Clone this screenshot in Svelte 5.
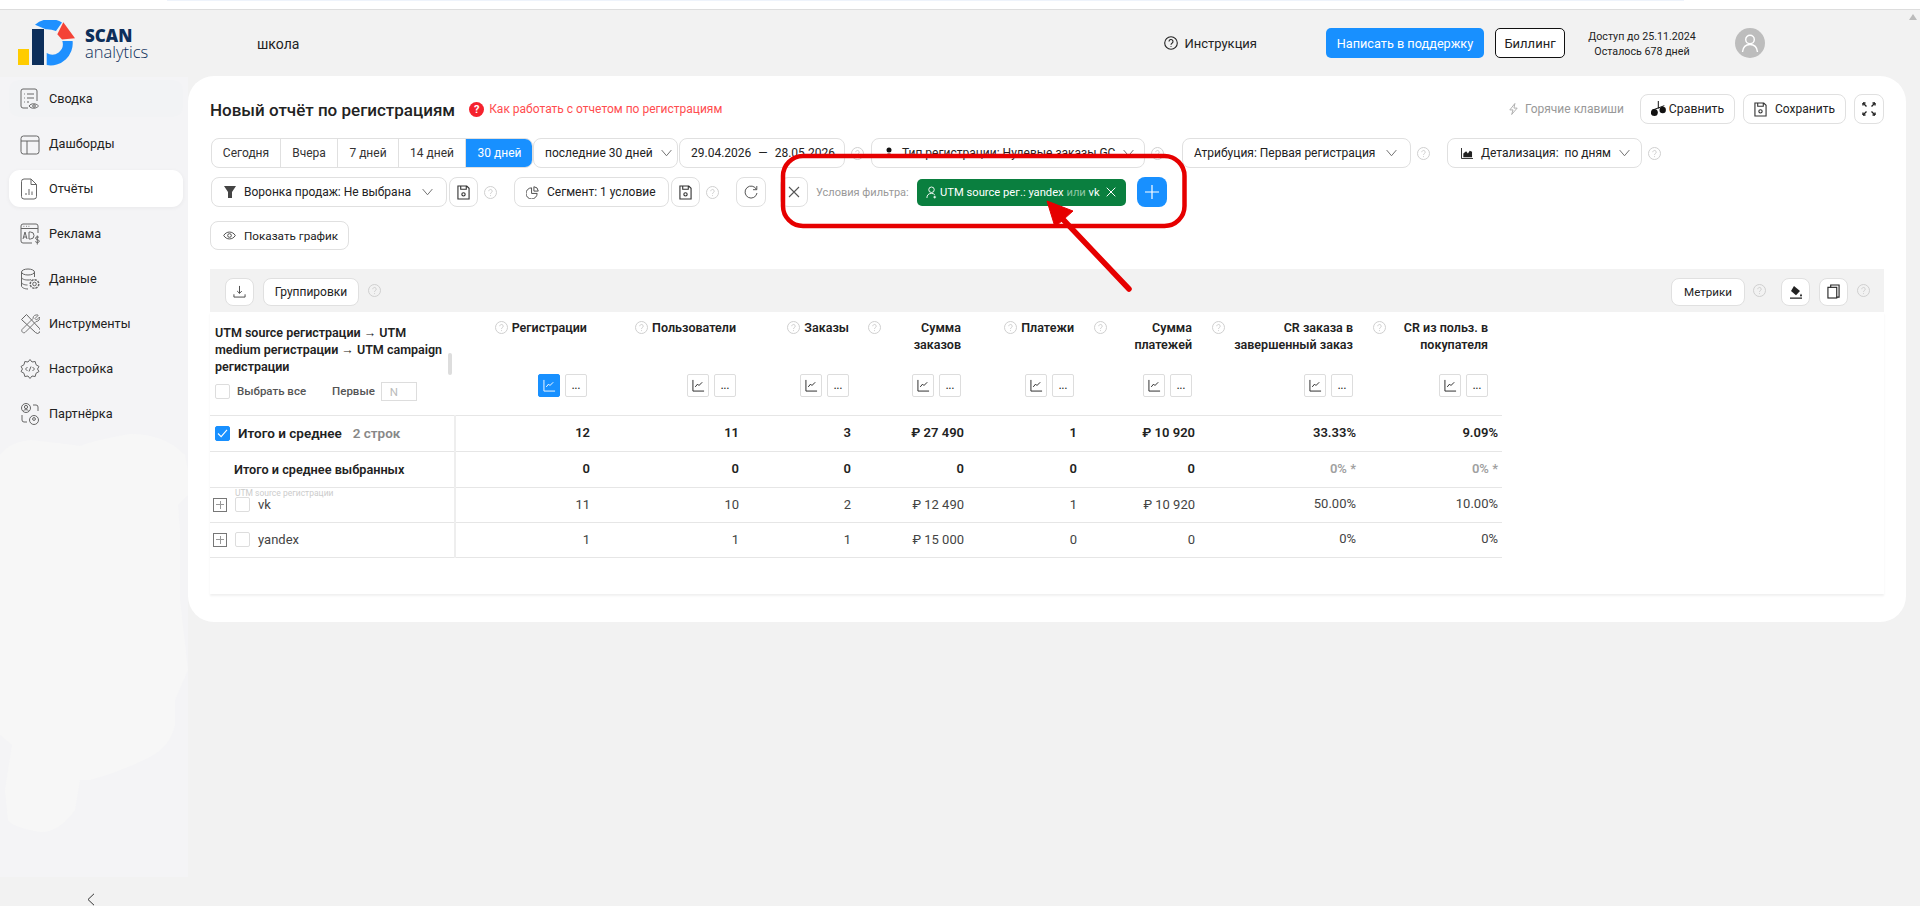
<script>
  const nav = [
    { label: "Сводка", icon: "summary" },
    { label: "Дашборды", icon: "dash" },
    { label: "Отчёты", icon: "report", active: true },
    { label: "Реклама", icon: "ads" },
    { label: "Данные", icon: "data" },
    { label: "Инструменты", icon: "tools" },
    { label: "Настройка", icon: "settings" },
    { label: "Партнёрка", icon: "partner" }
  ];

  const ranges = ["Сегодня", "Вчера", "7 дней", "14 дней", "30 дней"];

  const cols = [
    { title: "Регистрации", cls: "c1", on: true },
    { title: "Пользователи", cls: "c2" },
    { title: "Заказы", cls: "c3" },
    { title: "Сумма заказов", cls: "c4", wrap: true },
    { title: "Платежи", cls: "c5" },
    { title: "Сумма платежей", cls: "c6", wrap: true },
    { title: "CR заказа в завершенный заказ", cls: "c7", wrap: true },
    { title: "CR из польз. в покупателя", cls: "c8", wrap: true }
  ];

  const rows = [
    { name: "Итого и среднее", kind: "total", cells: ["12", "11", "3", "₽ 27 490", "1", "₽ 10 920", "33.33%", "9.09%"] },
    { name: "Итого и среднее выбранных", kind: "sel", cells: ["0", "0", "0", "0", "0", "0", "0% *", "0% *"] },
    { name: "vk", kind: "row", sub: "UTM source регистрации", cells: ["11", "10", "2", "₽ 12 490", "1", "₽ 10 920", "50.00%", "10.00%"] },
    { name: "yandex", kind: "row", cells: ["1", "1", "1", "₽ 15 000", "0", "0", "0%", "0%"] }
  ];
</script>

{#snippet help()}
  <svg class="help" viewBox="0 0 13 13" width="13" height="13" fill="none" stroke="#cfcfcf">
    <circle cx="6.5" cy="6.5" r="6" />
    <path d="M4.8 5.2a1.7 1.7 0 1 1 2.6 1.4c-.6.4-.9.7-.9 1.4M6.5 9.2v.9" />
  </svg>
{/snippet}

{#snippet chevron()}
  <svg class="chev" viewBox="0 0 12 8" width="11" height="8" fill="none" stroke="#666">
    <path d="M.7.8 6 7 11.3.8" />
  </svg>
{/snippet}

{#snippet save()}
  <svg viewBox="0 0 14 16" width="13" height="15" fill="none" stroke="#333" stroke-width="1.2">
    <path d="M1 1h9.5L13 3.5V15H1zM4 1v3.5h6V1" />
    <circle cx="7" cy="10" r="1.8" />
  </svg>
{/snippet}

{#snippet chart(on)}
  <svg viewBox="0 0 14 14" width="13" height="13" fill="none" stroke={on ? "#fff" : "#222"}>
    <path d="M1 1v12h12M3.5 8.5l2.5-3 1.5 1.5L11 3.5" />
  </svg>
{/snippet}

{#snippet navIcon(name)}
  <svg viewBox="0 0 20 22" width="20" height="22" fill="none" stroke="#666" stroke-width="1">
    {#if name === "summary"}
      <path d="M8 20H3a2 2 0 0 1-2-2V3a2 2 0 0 1 2-2h12a2 2 0 0 1 2 2v10" />
      <path d="M4 6h.8M4 10h.8M4 14h.8M7 6h7M7 10h7M7 14h2" />
      <path d="M9 18c2-3 7-3 9.500 0-2.500 3-7.500 3-9.500 0z" />
      <circle cx="14" cy="18" r="1.300" />
    {:else if name === "dash"}
      <rect x="1" y="3" width="18" height="18" rx="2.500" />
      <path d="M1 8h18M7 8v13" />
    {:else if name === "report"}
      <path d="M11 1H4a2.500 2.500 0 0 0-2.500 2.500v15A2.500 2.500 0 0 0 4 21h10a2.500 2.500 0 0 0 2.500-2.500V6.500z" />
      <path d="M11 1v5.500h5.500M6 17v-2M9 17v-6M12 17v-3.500" />
    {:else if name === "ads"}
      <path d="M12 20H3a2 2 0 0 1-2-2V3a2 2 0 0 1 2-2h13a2 2 0 0 1 2 2v7M1 5.500h17M3.500 3.300h.8M6 3.300h.8M8.500 3.300h.8" />
      <path d="M3 16l2-7 2 7M3.700 14h2.600M9 9v7h1.500a3.500 3.500 0 0 0 0-7zM19 14.500c-.5-1-3.500-1-3.500.7s3.800 1.200 3.800 3-3.500 1.500-4 .3M17.300 12.500v9" />
    {:else if name === "data"}
      <ellipse cx="8" cy="4" rx="6.500" ry="3" />
      <path d="M1.500 4v14c0 1.500 3 3 6.500 3M1.500 9c0 2 3 3 6.500 3 1 0 2 0 3-.3M1.500 14c0 2 3 3 6 3M14.500 4v5" />
      <circle cx="14.500" cy="16" r="1.800" />
      <circle cx="14.500" cy="16" r="4.300" stroke-dasharray="2.300 1" stroke-width="1.500" />
    {:else if name === "tools"}
      <path d="M2 7 7 2l13 14a2.800 2.800 0 0 1-4 4z" transform="translate(-.5 -.5)" />
      <path d="M18 2.500l-3 3 1.500 1.500 3-3c.5 2-.5 4.500-3.500 4.500l-11 11c-2 1-4-1-3-3l11-11c0-3 2.500-4 5-3.500z" stroke="#777" />
    {:else if name === "settings"}
      <path d="M10 1.500l2 2.500 3.200-.5.8 3.200L19 8.500 17.500 11 19 13.500l-3 1.800-.8 3.200-3.200-.5-2 2.500-2-2.500-3.200.5-.8-3.200-3-1.800L2.500 11 1 8.500l3-1.800.8-3.200 3.200.5z" />
      <path d="M7.500 9 5.500 11l2 2M12.500 9l2 2-2 2M11 8.500 9 13.500" />
    {:else}
      <circle cx="6" cy="5" r="4.500" />
      <circle cx="6" cy="4" r="1.600" />
      <path d="M3.300 8c1-1.800 4.400-1.800 5.400 0M13 2h3a2 2 0 0 1 2 2v4M2 12v5a2 2 0 0 0 2 2h3" />
      <circle cx="14" cy="17" r="4.500" />
      <circle cx="14" cy="16" r="1.400" />
    {/if}
  </svg>
{/snippet}

<div class="page">
  <div class="strip"><i></i></div>

  <header class="top">
    <div class="logo">
      <svg viewBox="18 20 58 46" width="58" height="46">
        <rect x="18" y="49" width="11" height="16" fill="#fc0" />
        <rect x="32" y="29" width="12" height="36" fill="#0d2f5a" />
        <path d="M72.600 41A22 22 0 0 1 46.700 65V53A10.500 10.500 0 0 0 62.300 41z" fill="#1e90ff" />
        <path d="M35 24.700A23 23 0 0 1 62 22.500L56 31q-5-2-10.300-1.700z" fill="#1e90ff" />
        <path d="M63.300 22.300 75 38.300 62 39.500 57.300 34.300z" fill="#f44336" />
      </svg>
      <div class="wordmark"><b>SCAN</b><span>analytics</span></div>
    </div>
    <div class="school">школа</div>
    <div class="guide">
      <svg viewBox="0 0 14 14" width="14" height="14" fill="none" stroke="#222" stroke-width="1.100">
        <circle cx="7" cy="7" r="6.300" />
        <path d="M5 5.500a2 2 0 1 1 3 1.700c-.7.400-1 .8-1 1.600M7 10v.8" />
      </svg>
      Инструкция
    </div>
    <button class="support">Написать в поддержку</button>
    <button class="billing">Биллинг</button>
    <div class="access">Доступ до 25.11.2024<br />Осталось 678 дней</div>
    <div class="avatar">
      <svg viewBox="0 0 20 20" width="20" height="20" fill="none" stroke="#fff" stroke-width="1.400">
        <circle cx="10" cy="6.500" r="4.300" />
        <path d="M2.500 19c.5-5 3.500-7.500 7.500-7.500s7 2.500 7.500 7.500" />
      </svg>
    </div>
  </header>

  <div class="layout">
    <aside class="side-wrap">
      <nav class="side">
        {#each nav as item, i}
          <div class="nav-item" class:active={item.active} class:first={i === 0}>
            {@render navIcon(item.icon)}
            <span>{item.label}</span>
          </div>
        {/each}
        <svg class="smudge" viewBox="0 0 188 800" width="188" height="800">
          <path d="M0 378Q8 366 30 363 60 366 80 369 95 363 130 357 165 357 185 378L188 393V418L178 428 180 453V523L188 593 175 623V648Q170 670 150 680 120 695 90 703H80L75 733Q60 755 40 755 12 750 8 743L5 713 12 668 0 658z" fill="#f7f7f7" />
        </svg>
      </nav>
      <div class="collapse">
        <svg viewBox="0 0 8 13" width="8" height="13" fill="none" stroke="#333">
          <path d="M7 .8 1 6.500 7 12.200" />
        </svg>
      </div>
    </aside>

    <main class="card">
      <div class="title-row">
        <h1>Новый отчёт по регистрациям</h1>
        <div class="howto">
          <span class="howto-q">?</span>
          Как работать с отчетом по регистрациям
        </div>
        <div class="hotkeys">
          <svg viewBox="0 0 12 14" width="11" height="14" fill="none" stroke="#aaa">
            <path d="M7.500 1 2 8h3.500L4 13l6-7H6.500z" />
          </svg>
          Горячие клавиши
        </div>
        <button class="btn b-compare">
          <svg viewBox="0 0 15 16" width="15" height="16">
            <path d="M7.300 0v7.500M1.700 9 13.300 4.700" stroke="#111" fill="none" />
            <circle cx="3.300" cy="11.600" r="3.500" fill="#111" />
            <circle cx="11.700" cy="9" r="3.200" fill="#111" />
          </svg>
          Сравнить
        </button>
        <button class="btn b-save">{@render save()} Сохранить</button>
        <button class="btn b-full" aria-label="Во весь экран">
          <svg viewBox="0 0 14 14" width="14" height="14" fill="none" stroke="#222" stroke-width="1.400">
            <path d="M1 1l3.500 3.500M13 1 9.500 4.500M1 13l3.500-3.500M13 13 9.500 9.500" />
            <path d="M1 1h2.500M1 1v2.500M13 1h-2.500M13 1v2.500M1 13h2.500M1 13v-2.500M13 13h-2.500M13 13v-2.500" />
          </svg>
        </button>
      </div>

      <div class="filters f1">
        <div class="seg">
          {#each ranges as r, i}
            <span class="seg-{i}" class:on={i === 4}>{r}</span>
          {/each}
        </div>
        <div class="box w-period">последние 30 дней {@render chevron()}</div>
        <div class="box w-date">29.04.2026 <em>—</em> 28.05.2026</div>
        {@render help()}
        <div class="box w-type">
          <svg viewBox="0 0 12 14" width="10" height="12" fill="#111">
            <circle cx="6" cy="3.500" r="3" /><path d="M1 13c0-4 2-5.500 5-5.500s5 1.500 5 5.500z" />
          </svg>
          Тип регистрации: Нулевые заказы GC {@render chevron()}
        </div>
        {@render help()}
        <div class="box w-attr">Атрибуция: Первая регистрация {@render chevron()}</div>
        {@render help()}
        <div class="box w-detail">
          <svg viewBox="0 0 13 12" width="12" height="11">
            <path d="M.5 0v11.500H13" stroke="#222" fill="none" />
            <path d="M2.500 10V6l3-2.500L7.500 6l2-3 2.500 1v6z" fill="#222" />
          </svg>
          Детализация: &nbsp;по дням {@render chevron()}
        </div>
        {@render help()}
      </div>

      <div class="filters f2">
        <div class="box w-funnel">
          <svg viewBox="0 0 12 12" width="12" height="12" fill="#444">
            <path d="M0 0h12L8 6v6H4V6z" />
          </svg>
          Воронка продаж: Не выбрана {@render chevron()}
        </div>
        <button class="btn sq">{@render save()}</button>
        {@render help()}
        <div class="box w-segment">
          <svg viewBox="0 0 14 14" width="13" height="13" fill="none" stroke="#444">
            <path d="M6 2a6 6 0 1 0 6 6H6z" /><path d="M8.500.8A5 5 0 0 1 13.200 5.500H8.500z" />
          </svg>
          Сегмент: 1 условие
        </div>
        <button class="btn sq">{@render save()}</button>
        {@render help()}
        <button class="btn sq b-refresh" aria-label="Обновить">
          <svg viewBox="0 0 14 14" width="14" height="14" fill="none" stroke="#555">
            <path d="M12.500 4.500A6 6 0 1 0 13 8M12.800 1v3.700H9" />
          </svg>
        </button>
        <button class="btn sq b-close" aria-label="Сбросить">
          <svg viewBox="0 0 12 12" width="12" height="12" fill="none" stroke="#555" stroke-width="1.100">
            <path d="M1 1l10 10M11 1 1 11" />
          </svg>
        </button>
        <span class="cond">Условия фильтра:</span>
        <div class="chip">
          <svg viewBox="0 0 12 14" width="11" height="13" fill="none" stroke="#fff">
            <circle cx="6" cy="4" r="3" /><path d="M1 13c0-3 1.500-5 5-5 1.500 0 2.500.4 3.500 1.300M9.500 10.500v3M8 12h3" />
          </svg>
          <span>UTM source рег.: yandex <u>или</u> vk</span>
          <svg viewBox="0 0 10 10" width="10" height="10" fill="none" stroke="#fff">
            <path d="M.7.7l8.600 8.600M9.300.7.700 9.300" />
          </svg>
        </div>
        <button class="plus" aria-label="Добавить">
          <svg viewBox="0 0 14 14" width="14" height="14" fill="none" stroke="#fff" stroke-width="1.200">
            <path d="M7 0v14M0 7h14" />
          </svg>
        </button>
      </div>

      <button class="btn b-graph">
        <svg viewBox="0 0 14 12" width="13" height="11" fill="none" stroke="#444">
          <path d="M.7 6C3.500 1 10.500 1 13.300 6 10.500 11 3.500 11 .7 6z" /><circle cx="7" cy="6" r="2" />
        </svg>
        Показать график
      </button>

      <div class="tbar">
        <button class="btn sq t" aria-label="Скачать">
          <svg viewBox="0 0 14 14" width="13" height="13" fill="none" stroke="#444">
            <path d="M7 1v8M4.500 6.500 7 9l2.500-2.500M1 10v3h12v-3" />
          </svg>
        </button>
        <button class="btn t b-group">Группировки</button>
        {@render help()}
        <button class="btn t b-metric">Метрики</button>
        {@render help()}
        <button class="btn sq t b-paint" aria-label="Заливка">
          <svg viewBox="0 0 14 14" width="14" height="14" fill="#222">
            <path d="M5 1l6 5-4 4.200-5-4.200z" /><path d="M12 8.500l1 2a1 1 0 0 1-2 0zM1 12.500h12v1.200H1z" />
          </svg>
        </button>
        <button class="btn sq t" aria-label="Копировать">
          <svg viewBox="0 0 14 16" width="13" height="15" fill="none" stroke="#222" stroke-width="1.200">
            <path d="M4 3.500V1h9v13h-2.500" /><rect x="1" y="3.500" width="9.500" height="11.500" />
          </svg>
        </button>
        {@render help()}
      </div>

      <div class="table-wrap">
        <table>
          <thead>
            <tr>
              <th class="c0">
                <div class="head-0">
                  <div class="group-name">UTM source регистрации → UTM medium регистрации → UTM campaign регистрации</div>
                  <i class="grip"></i>
                  <div class="pick">
                    <span class="check"></span>
                    <span>Выбрать все</span>
                    <span class="first-n">Первые</span>
                    <span class="n-input">N</span>
                  </div>
                </div>
              </th>
              {#each cols as c}
                <th class={c.cls}>
                  <div class="head">
                    <div class="head-title" class:wrap={c.wrap}>
                      {@render help()}
                      <span>{c.title}</span>
                    </div>
                    <div class="head-btns">
                      <span class="mini" class:on={c.on}>{@render chart(c.on)}</span>
                      <span class="mini">...</span>
                    </div>
                  </div>
                </th>
              {/each}
            </tr>
          </thead>
          <tbody>
            {#each rows as row}
              <tr class={row.kind}>
                <td class="c0">
                  <div class="name">
                    {#if row.kind === "total"}
                      <span class="check checked">
                        <svg viewBox="0 0 12 10" width="11" height="9" fill="none" stroke="#fff" stroke-width="1.200">
                          <path d="M1 5l3.500 3.500L11 1" />
                        </svg>
                      </span>
                      <b>{row.name}</b>
                      <span class="count">2 строк</span>
                    {:else if row.kind === "sel"}
                      <b class="sel-name">{row.name}</b>
                    {:else}
                      <span class="expand"></span>
                      <span class="check"></span>
                      <span>{row.name}</span>
                      {#if row.sub}<small>{row.sub}</small>{/if}
                    {/if}
                  </div>
                </td>
                {#each row.cells as v, i}
                  <td class:pct={i > 5} class:dim={v === "0% *"}>{v}</td>
                {/each}
              </tr>
            {/each}
          </tbody>
        </table>
      </div>
    </main>
  </div>

  <svg class="note" viewBox="0 0 1920 906" width="1920" height="906" fill="none">
    <rect x="783" y="156" width="401.500" height="70" rx="20" stroke="#e60000" stroke-width="4.500" />
    <path d="M1129 289 1056 212" stroke="#e60000" stroke-width="5.500" stroke-linecap="round" />
    <path d="M1047 201 1073 211 1055 227z" fill="#e60000" stroke="#e60000" stroke-linejoin="round" />
  </svg>
  <svg class="scroll-up" viewBox="0 0 8 6" width="8" height="6"><path d="M4 0l4 6H0z" fill="#bbb" /></svg>
</div>

<style>
  :global(body) {
    margin: 0;
    background: #f2f2f2;
  }
  .page {
    position: relative;
    width: 1920px;
    height: 906px;
    overflow: hidden;
    background: #f2f2f2;
    color: #222;
    font-family: Roboto, "Noto Sans", sans-serif;
    font-size: 12px;
  }
  button {
    font: inherit;
    color: inherit;
  }
  svg {
    flex: none;
  }
  .strip {
    height: 9px;
    padding: 0 236px 0 167px;
    background: #fff;
    border-bottom: 1px solid #ddd;
  }
  .strip i {
    display: block;
    height: 1px;
    background: #eef3fb;
  }

  /* header */
  .top {
    display: flex;
    align-items: center;
    height: 66px;
    padding: 0 155px 0 18px;
  }
  .logo {
    display: flex;
    align-items: center;
    gap: 9px;
    width: 239px;
  }
  .wordmark {
    display: flex;
    flex-direction: column;
    color: #0d2f5a;
    font-family: "Open Sans", sans-serif;
  }
  .wordmark b {
    font-size: 17px;
    font-weight: 800;
    line-height: 16px;
  }
  .wordmark span {
    font-size: 16.500px;
    font-weight: 300;
    line-height: 15px;
  }
  .school {
    font-size: 14px;
    margin-right: auto;
    padding-top: 2px;
  }
  .guide {
    display: flex;
    align-items: center;
    gap: 6px;
    font-size: 13px;
  }
  .support {
    width: 158px;
    height: 30px;
    margin-left: 69px;
    border: 0;
    border-radius: 5px;
    background: #1890ff;
    color: #fff;
    font-size: 12.700px;
    padding: 0;
  }
  .billing {
    width: 70px;
    height: 30px;
    margin-left: 11px;
    border: 1px solid #111;
    border-radius: 5px;
    background: #fff;
    font-size: 13px;
    padding: 0;
  }
  .access {
    width: 120px;
    margin-left: 17px;
    padding-top: 1px;
    text-align: center;
    font-size: 10.700px;
    line-height: 15px;
  }
  .avatar {
    display: grid;
    place-items: center;
    width: 30px;
    height: 30px;
    margin-left: 33px;
    border-radius: 50%;
    background: #bdbdbd;
  }

  /* sidebar */
  .layout {
    display: flex;
    align-items: flex-start;
  }
  .side-wrap {
    width: 188px;
    flex: none;
    padding-top: 1px;
  }
  .side {
    position: relative;
    display: flex;
    flex-direction: column;
    gap: 8px;
    box-sizing: border-box;
    height: 800px;
    padding: 3px 5px 0 9px;
    background: #f4f4f6;
  }
  .nav-item {
    display: flex;
    align-items: center;
    gap: 9px;
    height: 37px;
    padding-left: 11px;
    border-radius: 11px;
    font-size: 12.700px;
  }
  .nav-item.first {
    background: #f2f3f5;
  }
  .nav-item.active {
    background: #fff;
    box-shadow: 0 1px 4px rgb(0 0 0 / 0.05);
  }
  .smudge {
    position: absolute;
    left: 0;
    top: 0;
    pointer-events: none;
  }
  .collapse {
    display: flex;
    justify-content: center;
    padding: 16px 7px 0 0;
  }

  /* card */
  .card {
    box-sizing: border-box;
    width: 1718px;
    height: 546px;
    padding: 18px 22px 0;
    border-radius: 26px;
    background: #fff;
  }
  .title-row {
    display: flex;
    align-items: center;
    height: 30px;
  }
  h1 {
    margin: 0;
    padding-top: 1px;
    font-size: 17px;
    font-weight: 500;
  }
  .howto {
    display: flex;
    align-items: center;
    gap: 5px;
    margin-left: 14px;
    margin-right: auto;
    color: #ff4d4f;
  }
  .howto-q {
    display: grid;
    place-items: center;
    width: 15px;
    height: 15px;
    border-radius: 50%;
    background: #f5222d;
    color: #fff;
    font-size: 11px;
    font-weight: 700;
  }
  .hotkeys {
    display: flex;
    align-items: center;
    gap: 6px;
    color: #999;
    margin-right: 16px;
  }
  .btn {
    display: inline-flex;
    align-items: center;
    justify-content: center;
    gap: 8px;
    box-sizing: border-box;
    height: 30px;
    padding: 0;
    border: 1px solid #e0e0e0;
    border-radius: 8px;
    background: #fff;
    flex: none;
  }
  .b-compare {
    width: 95px;
    gap: 3px;
    font-size: 12.300px;
  }
  .b-save {
    width: 103px;
    margin-left: 8px;
  }
  .b-full {
    width: 30px;
    margin-left: 8px;
  }
  .sq {
    width: 29px;
  }

  /* filter rows */
  .filters {
    display: flex;
    align-items: center;
    height: 30px;
    padding-left: 1px;
  }
  .f1 {
    margin-top: 14px;
  }
  .f2 {
    margin-top: 9px;
  }
  .seg {
    display: flex;
    height: 30px;
    box-sizing: border-box;
    border: 1px solid #e0e0e0;
    border-radius: 8px;
    overflow: hidden;
    flex: none;
  }
  .seg span {
    display: grid;
    place-items: center;
    box-sizing: border-box;
    border-right: 1px solid #e0e0e0;
    color: #333;
  }
  .seg-0 { width: 69px; }
  .seg-1 { width: 57px; }
  .seg-2 { width: 61px; }
  .seg-3 { width: 67px; }
  .seg .seg-4 {
    width: 67px;
    margin-right: -1px;
    border-right: 0;
  }
  .seg span.on {
    margin-top: -1px;
    height: 30px;
    background: #1890ff;
    color: #fff;
  }
  .box {
    display: flex;
    align-items: center;
    box-sizing: border-box;
    height: 30px;
    padding: 0 12px 0 11px;
    gap: 8px;
    border: 1px solid #e0e0e0;
    border-radius: 8px;
    background: #fff;
    white-space: nowrap;
    flex: none;
  }
  .chev {
    margin-left: auto;
  }
  .filters .help {
    margin-left: 6px;
  }
  .w-period { width: 145px; padding-right: 10px; }
  .w-date { width: 166px; margin-left: 1px; gap: 7px; }
  .w-date em { font-style: normal; }
  .w-type { width: 274px; margin-left: 7px; padding-left: 12px; }
  .w-attr { width: 229px; margin-left: 18px; padding-right: 13px; }
  .w-detail { width: 195px; margin-left: 17px; padding-left: 13px; }
  .w-funnel { width: 236px; padding-left: 12px; padding-right: 13px; }
  .w-segment { width: 155px; margin-left: 17px; padding-left: 11px; }
  .f2 .sq {
    margin-left: 2px;
  }
  .f2 .b-refresh {
    margin-left: 17px;
    width: 30px;
  }
  .f2 .b-close {
    width: 28px;
    margin-left: 14px;
  }
  .cond {
    width: 91px;
    margin-left: 8px;
    color: #999;
    font-size: 11px;
    white-space: nowrap;
    flex: none;
  }
  .chip {
    display: flex;
    align-items: center;
    gap: 3px;
    box-sizing: border-box;
    width: 209px;
    height: 27px;
    margin-left: 10px;
    padding: 0 9px;
    border-radius: 5px;
    background: #0a7f3f;
    color: #fff;
    white-space: nowrap;
    font-size: 11.200px;
    flex: none;
  }
  .chip u {
    text-decoration: none;
    color: #8fc7a5;
  }
  .chip svg:last-child {
    margin-left: 3px;
  }
  .plus {
    display: grid;
    place-items: center;
    width: 30px;
    height: 30px;
    margin-left: 11px;
    padding: 0;
    border: 0;
    border-radius: 8px;
    background: #1890ff;
    flex: none;
  }
  .b-graph {
    display: flex;
    justify-content: flex-start;
    width: 139px;
    height: 29px;
    margin-top: 14px;
    padding-left: 12px;
    font-size: 11.700px;
  }

  /* table toolbar */
  .tbar {
    display: flex;
    align-items: center;
    height: 43px;
    margin-top: 19px;
    padding: 0 14px 0 15px;
    background: #f2f2f2;
  }
  .t {
    height: 28px;
    width: 29px;
    margin-top: 2px;
  }
  .tbar .help {
    margin-left: 9px;
  }
  .b-group {
    width: 96px;
    margin-left: 9px;
  }
  .b-metric {
    width: 74px;
    margin-left: auto;
    font-size: 11.600px;
  }
  .tbar .b-metric + .help {
    margin-left: 8px;
  }
  .tbar .b-paint {
    margin-left: 15px;
  }
  .tbar .b-paint + .t {
    margin-left: 9px;
  }

  /* table */
  .table-wrap {
    height: 282px;
    box-shadow: 0 2px 2px rgb(0 0 0 / 0.06);
  }
  table {
    table-layout: fixed;
    width: 1292px;
    border-collapse: collapse;
  }
  th {
    height: 103px;
    padding: 0;
    vertical-align: top;
    font-weight: 600;
    font-size: 12.500px;
    text-align: right;
    border-bottom: 1px solid #e6e6e6;
    box-sizing: border-box;
  }
  th.c0 { width: 245px; }
  th.c1 { width: 139px; }
  th.c2 { width: 149px; }
  th.c3 { width: 112px; }
  th.c4 { width: 113px; }
  th.c5 { width: 113px; }
  th.c6 { width: 118px; }
  th.c7 { width: 161px; }
  th.c8 { width: 142px; }
  .head-0 {
    position: relative;
    box-sizing: border-box;
    height: 103px;
    padding: 12px 6px 0 5px;
    text-align: left;
    line-height: 17px;
  }
  .group-name {
    width: 232px;
  }
  .grip {
    position: absolute;
    left: 238px;
    top: 41px;
    width: 4px;
    height: 22px;
    border-radius: 2px;
    background: #ddd;
  }
  .pick {
    display: flex;
    align-items: center;
    gap: 7px;
    margin-top: 7px;
    font-weight: 500;
    font-size: 11.500px;
    color: #555;
  }
  .first-n {
    margin-left: 19px;
  }
  .n-input {
    display: block;
    box-sizing: border-box;
    width: 36px;
    height: 19px;
    margin-left: -1px;
    padding-left: 8px;
    border: 1px solid #ddd;
    color: #bbb;
    font-weight: 400;
    line-height: 18px;
  }
  .check {
    display: inline-grid;
    place-items: center;
    box-sizing: border-box;
    width: 15px;
    height: 15px;
    border: 1px solid #ddd;
    border-radius: 2px;
    flex: none;
    background: #fff;
  }
  .check.checked {
    background: #1890ff;
    border-color: #1890ff;
  }
  .head {
    box-sizing: border-box;
    display: flex;
    flex-direction: column;
    align-items: flex-end;
    height: 102px;
    padding: 7px 7px 0 0;
    line-height: 17px;
  }
  .c3 .head {
    padding-right: 6px;
  }
  .c8 .head {
    padding-right: 14px;
  }
  .head-title {
    display: flex;
    justify-content: flex-end;
    gap: 4px;
    width: 100%;
  }
  .head-title .help {
    margin-top: 2px;
  }
  .head-title.wrap {
    padding-left: 13px;
    box-sizing: border-box;
  }
  .head-title.wrap .help {
    margin-right: auto;
  }
  .head-title.wrap span {
    max-width: 124px;
  }
  .head-btns {
    display: flex;
    gap: 5px;
    margin-top: auto;
    margin-bottom: 17px;
  }
  .mini {
    display: grid;
    place-items: center;
    box-sizing: border-box;
    width: 22px;
    height: 23px;
    border: 1px solid #ddd;
    border-radius: 2px;
    background: #fff;
    font-weight: 500;
    font-size: 10px;
    line-height: 1;
  }
  .mini.on {
    background: #1890ff;
    border-color: #1890ff;
  }
  td {
    height: 35px;
    box-sizing: border-box;
    padding: 0 4px 2px 0;
    text-align: right;
    border-bottom: 1px solid #e6e6e6;
    font-size: 13px;
    white-space: nowrap;
  }
  .total td, .sel td {
    height: 36px;
    font-weight: 600;
  }
  td.c0 {
    padding: 0 0 1px;
    text-align: left;
    border-right: 2px solid #eee;
  }
  td.pct {
    padding-bottom: 3px;
  }
  td.dim {
    color: #a0a0a0;
  }
  .row td {
    color: #444;
    font-weight: 400;
  }
  .name {
    position: relative;
    display: flex;
    align-items: center;
    gap: 8px;
    padding-left: 5px;
  }
  .name b {
    font-weight: 600;
    color: #222;
  }
  .total .name {
    font-size: 13.500px;
  }
  .sel-name {
    margin-left: 19px;
    font-size: 12.700px;
  }
  .count {
    margin-left: 3px;
    color: #888;
  }
  .row .name {
    padding-left: 3px;
  }
  .expand {
    box-sizing: border-box;
    width: 14px;
    height: 14px;
    border: 1px solid #777;
    background:
      linear-gradient(#999, #999) center / 8px 1px no-repeat,
      linear-gradient(#999, #999) center / 1px 8px no-repeat;
    flex: none;
  }
  small {
    position: absolute;
    left: 25px;
    top: -9px;
    color: #ccc;
    font-size: 8.500px;
    font-weight: 400;
  }

  /* annotation drawn on top of the screenshot */
  .note {
    position: absolute;
    left: 0;
    top: 0;
    pointer-events: none;
  }
  .scroll-up {
    position: absolute;
    left: 1909px;
    top: 14px;
  }
</style>
